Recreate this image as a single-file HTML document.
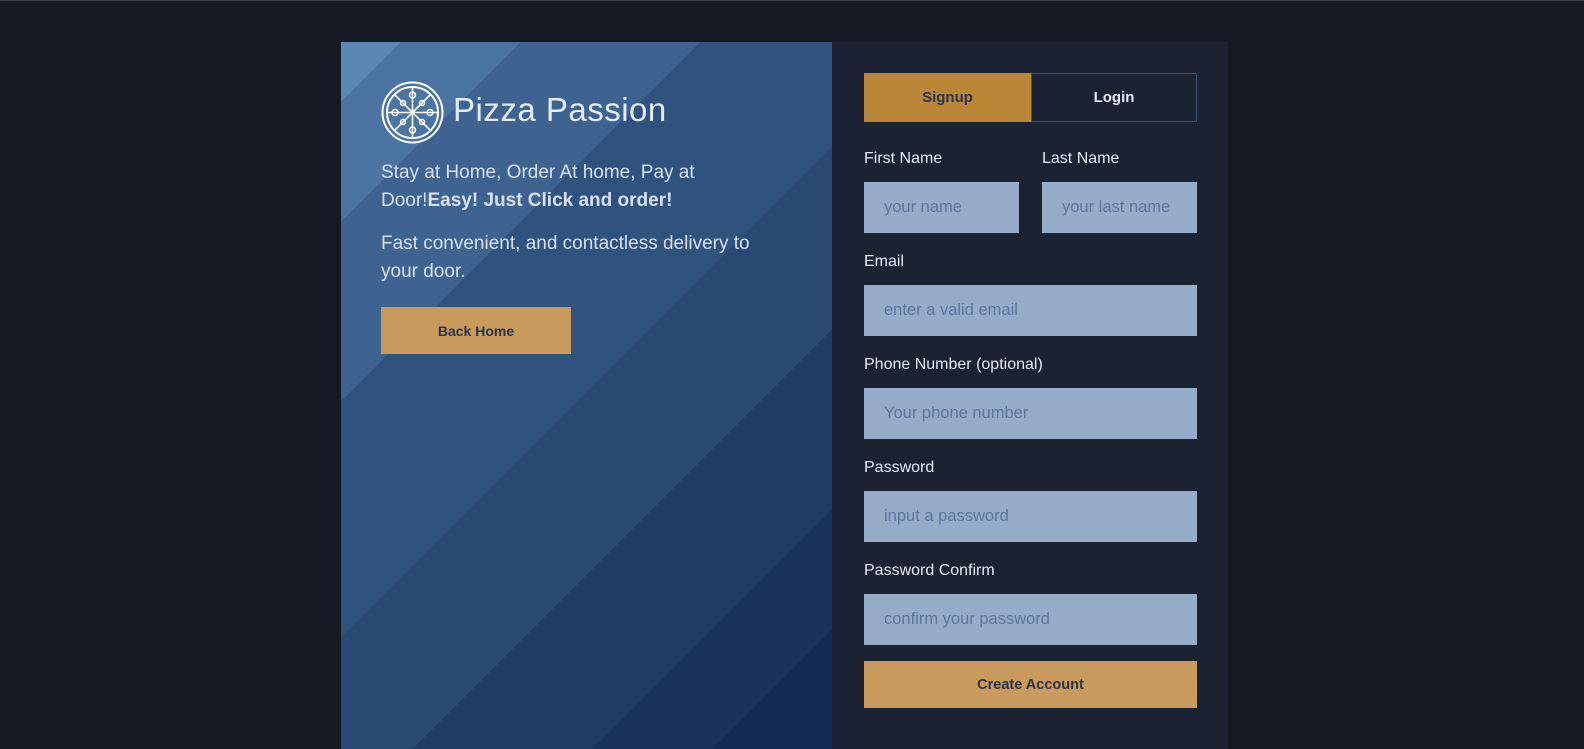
<!DOCTYPE html>
<html><head><meta charset="utf-8"><style>
*{margin:0;padding:0;box-sizing:border-box}
body{width:1584px;height:748px;background:#141a23;font-family:"Liberation Sans",sans-serif;position:relative;overflow:hidden;border-top:1px solid #3a404a}
.left{position:absolute;left:341px;top:41px;width:491px;height:707px;
background:linear-gradient(135deg,#5b87b2 0%,#5b87b2 5%,#4b74a2 5%,#4b74a2 15%,#3f6390 15%,#3f6390 30%,#30527e 30%,#30527e 49.7%,#294874 49.7%,#294874 65%,#203b68 65%,#203b68 80%,#1a3260 80%,#1a3260 90%,#142a58 90%)}
.right{position:absolute;left:832px;top:41px;width:396px;height:707px;background:#1b2232}
.abs{position:absolute}
.title{left:453px;top:90px;font-size:33px;color:#e4ebf5;letter-spacing:0.5px}
.p{left:381px;width:400px;font-size:19px;line-height:28px;color:#d6e0ee}
.btn{display:flex;align-items:center;justify-content:center;font-weight:bold;font-size:14px;color:#2a3448}
.lbl{font-size:16px;color:#e4ebf5}
.in{background:#97acc8;color:#5b759b;font-size:16.5px;padding-left:20px;display:flex;align-items:center;height:51px;overflow:hidden;white-space:nowrap}
</style></head><body>
<div class="left"></div>
<div class="right"></div>
<svg class="abs" style="left:381px;top:80px" width="63" height="63" viewBox="0 0 63 63" fill="none" stroke="#fff" stroke-width="2">
<circle cx="31.5" cy="31.5" r="30"/><circle cx="31.5" cy="31.5" r="25.5"/>
<g stroke-width="1.6"><line x1="31.5" y1="7" x2="31.5" y2="56"/><line x1="7" y1="31.5" x2="56" y2="31.5"/><line x1="14" y1="14" x2="49" y2="49"/><line x1="49" y1="14" x2="14" y2="49"/></g>
<g stroke-width="1.5"><circle cx="31.5" cy="14" r="3"/><circle cx="31.5" cy="49" r="3"/><circle cx="14" cy="31.5" r="3"/><circle cx="49" cy="31.5" r="3"/><circle cx="22" cy="22" r="2.5"/><circle cx="41" cy="22" r="2.5"/><circle cx="22" cy="41" r="2.5"/><circle cx="41" cy="41" r="2.5"/></g>
</svg>
<div class="abs title">Pizza Passion</div>
<div class="abs p" style="top:158px">Stay at Home, Order At home, Pay at Door!<b>Easy! Just Click and order!</b></div>
<div class="abs p" style="top:229px">Fast convenient, and contactless delivery to your door.</div>
<div class="abs btn" style="left:381px;top:306px;width:190px;height:47px;background:#c89b5c">Back Home</div>

<div class="abs btn" style="left:864px;top:72px;width:167px;height:49px;background:#bb8638;font-size:15px">Signup</div>
<div class="abs btn" style="left:1031px;top:72px;width:166px;height:49px;border:1px solid #3b5378;color:#e4ebf5;font-size:15px">Login</div>

<div class="abs lbl" style="left:864px;top:149px">First Name</div>
<div class="abs lbl" style="left:1042px;top:149px">Last Name</div>
<div class="abs in" style="left:864px;top:181px;width:155px">your name</div>
<div class="abs in" style="left:1042px;top:181px;width:155px">your last name</div>
<div class="abs lbl" style="left:864px;top:252px">Email</div>
<div class="abs in" style="left:864px;top:284px;width:333px">enter a valid email</div>
<div class="abs lbl" style="left:864px;top:355px">Phone Number (optional)</div>
<div class="abs in" style="left:864px;top:387px;width:333px">Your phone number</div>
<div class="abs lbl" style="left:864px;top:458px">Password</div>
<div class="abs in" style="left:864px;top:490px;width:333px">input a password</div>
<div class="abs lbl" style="left:864px;top:561px">Password Confirm</div>
<div class="abs in" style="left:864px;top:593px;width:333px">confirm your password</div>
<div class="abs btn" style="left:864px;top:660px;width:333px;height:47px;background:#c89b5c;font-size:14.5px">Create Account</div>
</body></html>
